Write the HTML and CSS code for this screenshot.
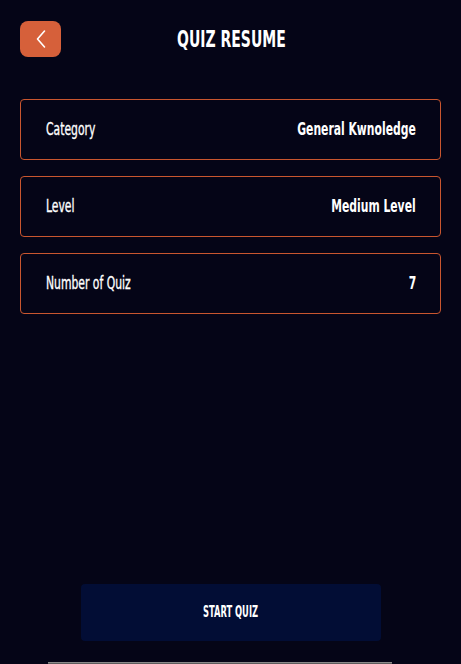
FILE: index.html
```html
<!DOCTYPE html>
<html lang="en">
<head>
<meta charset="utf-8">
<title>Quiz Resume</title>
<link rel="stylesheet" href="styles.css">
</head>
<body>
<div class="screen">
  <header class="topbar">
    <button class="back" aria-label="Back">
      <svg width="12" height="20" viewBox="0 0 12 20"><path d="M9.5 2 L2.5 10 L9.5 18" fill="none" stroke="#fff" stroke-width="1.6" stroke-linecap="round" stroke-linejoin="round"/></svg>
    </button>
    <h1 class="title"><span class="title-text">QUIZ RESUME</span></h1>
  </header>
  <main class="list">
    <div class="row"><span class="label">Category</span><span class="value">General Kwnoledge</span></div>
    <div class="row"><span class="label">Level</span><span class="value">Medium Level</span></div>
    <div class="row"><span class="label">Number of Quiz</span><span class="value">7</span></div>
  </main>
  <div class="footer">
    <button class="start"><span class="start-text">START QUIZ</span></button>
  </div>
  <div class="scrollbar"></div>
</div>
</body>
</html>
```
FILE: styles.css
```css
* { box-sizing: border-box; }
html, body { margin: 0; padding: 0; height: 100%; }
body {
  background: #050517;
  color: #fff;
  font-family: "DejaVu Sans Condensed", "DejaVu Sans", sans-serif;
  font-stretch: condensed;
}
.screen {
  height: 664px;
  display: flex;
  flex-direction: column;
  padding: 21px 20px 0 20px;
}
.topbar {
  display: flex;
  align-items: center;
  height: 36px;
}
.back {
  width: 41px;
  height: 36px;
  border: 0;
  border-radius: 8px;
  background: #d6603a;
  display: flex;
  align-items: center;
  justify-content: center;
  padding: 0;
  flex: none;
}
.title {
  margin: 0;
  flex: 1;
  text-align: center;
  font-size: 23px;
  font-weight: bold;
  line-height: 1;
  padding-right: 41px;
  padding-left: 2px;
}
.title-text {
  display: inline-block;
  transform: scaleX(0.677);
  transform-origin: center;
}
.list {
  margin-top: 42px;
  display: flex;
  flex-direction: column;
  gap: 16px;
}
.row {
  height: 61px;
  border: 1px solid #c9562f;
  border-radius: 4px;
  display: flex;
  align-items: center;
  justify-content: space-between;
  padding: 0 24px 1px 25px;
  font-size: 18px;
  line-height: 1;
}
.label {
  display: inline-block;
  transform: scaleX(0.667);
  transform-origin: left center;
  white-space: nowrap;
  -webkit-text-stroke: 0.35px #fff;
}
.value {
  display: inline-block;
  font-weight: bold;
  transform: scaleX(0.667);
  transform-origin: right center;
  white-space: nowrap;
}
.footer {
  margin-top: auto;
  display: flex;
  justify-content: center;
  padding-bottom: 21px;
}
.start {
  width: 300px;
  height: 57px;
  border: 0;
  border-radius: 4px;
  background: #020d35;
  color: #fff;
  font-family: inherit;
  font-stretch: condensed;
  font-size: 16px;
  font-weight: bold;
  line-height: 1;
  padding: 0 0 2px 0;
}
.start-text {
  display: inline-block;
  transform: scaleX(0.58);
  transform-origin: center;
}
.scrollbar {
  height: 2px;
  margin: 0 49px 0 28px;
  background: #5c5c5c;
  border-top: 1px solid #8a8a8a;
}
```
